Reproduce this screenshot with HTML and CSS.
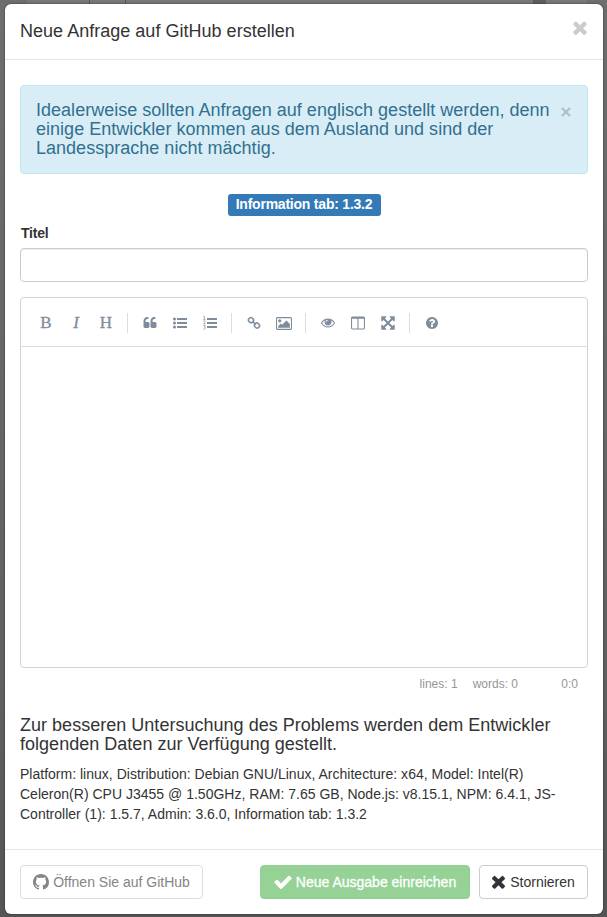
FILE: index.html
```
<!DOCTYPE html>
<html lang="de">
<head>
<meta charset="utf-8">
<title>Neue Anfrage auf GitHub erstellen</title>
<link rel="stylesheet" href="styles.css">
</head>
<body>
<div class="modal">
  <header class="modal-header">
    <h4>Neue Anfrage auf GitHub erstellen</h4>
    <svg class="close" viewBox="302 238 1188 1316"><path d="M1490 1322q0 40-28 68l-136 136q-28 28-68 28t-68-28l-294-294-294 294q-28 28-68 28t-68-28l-136-136q-28-28-28-68t28-68l294-294-294-294q-28-28-28-68t28-68l136-136q28-28 68-28t68 28l294 294 294-294q28-28 68-28t68 28l136 136q28 28 28 68t-28 68l-294 294 294 294q28 28 28 68z"/></svg>
  </header>
  <main class="modal-body">
    <div class="alert">
      <h4>Idealerweise sollten Anfragen auf englisch gestellt werden, denn einige Entwickler kommen aus dem Ausland und sind der Landessprache nicht mächtig.</h4>
      <svg class="alert-close" viewBox="0 0 10 10"><path d="M1 1l8 8M9 1l-8 8"/></svg>
    </div>
    <div class="label-row"><span class="label">Information tab: 1.3.2</span></div>
    <label class="field-label" for="title">Titel</label>
    <input class="field" id="title" type="text">
    <div class="editor">
      <div class="toolbar">
        <span class="tool letter">B</span>
        <span class="tool letter italic">I</span>
        <span class="tool letter">H</span>
        <i class="sep"></i>
        <span class="tool"><svg viewBox="0 0 1792 1792"><path d="M832 960v384q0 80-56 136t-136 56h-384q-80 0-136-56t-56-136v-704q0-104 40.5-198.5t109.5-163.5 163.5-109.5 198.5-40.5h64q26 0 45 19t19 45v128q0 26-19 45t-45 19h-64q-106 0-181 75t-75 181v32q0 40 28 68t68 28h224q80 0 136 56t56 136zm896 0v384q0 80-56 136t-136 56h-384q-80 0-136-56t-56-136v-704q0-104 40.5-198.5t109.5-163.5 163.5-109.5 198.5-40.5h64q26 0 45 19t19 45v128q0 26-19 45t-45 19h-64q-106 0-181 75t-75 181v32q0 40 28 68t68 28h224q80 0 136 56t56 136z"/></svg></span>
        <span class="tool"><svg viewBox="0 0 14 14"><circle cx="1.5" cy="3" r="1.5"/><circle cx="1.5" cy="7" r="1.5"/><circle cx="1.5" cy="11" r="1.5"/><path d="M4 2h10v2H4zM4 6h10v2H4zM4 10h10v2H4z"/></svg></span>
        <span class="tool"><svg viewBox="0 0 14 14"><path d="M4 2h10v2H4zM4 6h10v2H4zM4 10h10v2H4z"/><path class="digits" d="M.4.8l1-.5v3.2M.3 3.6h2.2M.4 5.3q1-.9 1.8 0 .3.8-1.8 2.6h2.2M.4 9.7h2L1.3 11q1.4.2 1.1 1.5-.8 1.2-2.1.4"/></svg></span>
        <i class="sep"></i>
        <span class="tool"><svg class="link" viewBox="0 0 14 14"><rect x="-2.1" y="-2.5" width="5" height="4.6" rx="2" transform="translate(3.6 4) rotate(45)"/><rect x="-2.9" y="-2.1" width="5" height="4.6" rx="2" transform="translate(10.4 9.7) rotate(45)"/><path d="M5.4 5.3l3.4 3.4"/></svg></span>
        <span class="tool"><svg class="wide" viewBox="-64 0 1920 1792"><path d="M576 576q0 80-56 136t-136 56-136-56-56-136 56-136 136-56 136 56 56 136zm1024 384v448h-1408v-192l320-320 160 160 512-512zm96-704h-1600q-13 0-22.5 9.5t-9.5 22.5v1216q0 13 9.5 22.5t22.5 9.5h1600q13 0 22.5-9.5t9.5-22.5v-1216q0-13-9.5-22.5t-22.5-9.5zm160 32v1216q0 66-47 113t-113 47h-1600q-66 0-113-47t-47-113v-1216q0-66 47-113t113-47h1600q66 0 113 47t47 113z"/></svg></span>
        <i class="sep"></i>
        <span class="tool"><svg viewBox="0 64 1792 1792"><path d="M1664 960q-152-236-381-353 61 104 61 225 0 185-131.5 316.5t-316.5 131.5-316.5-131.5-131.5-316.5q0-121 61-225-229 117-381 353 133 205 333.5 326.5t434.5 121.5 434.5-121.5 333.5-326.5zm-720-384q0-20-14-34t-34-14q-125 0-214.5 89.5t-89.5 214.5q0 20 14 34t34 14 34-14 14-34q0-86 61-147t147-61q20 0 34-14t14-34zm848 384q0 34-20 69-140 230-376.5 368.5t-499.5 138.5-499.5-139-376.5-368q-20-35-20-69t20-69q140-229 376.5-368t499.5-139 499.5 139 376.5 368q20 35 20 69z"/></svg></span>
        <span class="tool"><svg viewBox="64 128 1664 1536"><path d="M224 1536h608v-1152h-640v1120q0 13 9.5 22.5t22.5 9.5zm1376-32v-1120h-640v1152h608q13 0 22.5-9.5t9.5-22.5zm128-1216v1216q0 66-47 113t-113 47h-1344q-66 0-113-47t-47-113v-1216q0-66 47-113t113-47h1344q66 0 113 47t47 113z"/></svg></span>
        <span class="tool"><svg viewBox="100 100 1592 1592"><path d="M1411 541l-355 355 355 355 144-144q29-31 70-14 39 17 39 59v448q0 26-19 45t-45 19h-448q-42 0-59-40-17-39 14-69l144-144-355-355-355 355 144 144q31 30 14 69-17 40-59 40h-448q-26 0-45-19t-19-45v-448q0-42 40-59 39-17 69 14l144 144 355-355-355-355-144 144q-19 19-45 19-12 0-24-5-40-17-40-59v-448q0-26 19-45t45-19h448q42 0 59 40 17 39-14 69l-144 144 355 355 355-355-144-144q-31-30-14-69 17-40 59-40h448q26 0 45 19t19 45v448q0 42-39 59-13 5-25 5-26 0-45-19z"/></svg></span>
        <i class="sep"></i>
        <span class="tool"><svg viewBox="0 0 1792 1792"><path d="M1024 1376v-192q0-14-9-23t-23-9h-192q-14 0-23 9t-9 23v192q0 14 9 23t23 9h192q14 0 23-9t9-23zm256-672q0-88-55.5-163t-138.5-116-170-41q-243 0-371 213-15 24 8 42l132 100q7 6 19 6 16 0 25-12 53-68 86-92 34-24 86-24 48 0 85.5 26t37.5 59q0 38-20 61t-68 45q-63 28-115.5 86.5t-52.5 125.5v36q0 14 9 23t23 9h192q14 0 23-9t9-23q0-19 21.5-49.5t54.5-49.5q32-18 49-28.5t46-35 44.5-48 28-60.5 12.5-81zm384 192q0 209-103 385.5t-279.5 279.5-385.5 103-385.5-103-279.5-279.5-103-385.5 103-385.5 279.5-279.5 385.5-103 385.5 103 279.5 279.5 103 385.5z"/></svg></span>
      </div>
      <div class="canvas"></div>
    </div>
    <div class="status"><span>lines: 1</span><span>words: 0</span><span class="cursor">0:0</span></div>
    <h4 class="note">Zur besseren Untersuchung des Problems werden dem Entwickler folgenden Daten zur Verfügung gestellt.</h4>
    <p class="info">Platform: linux, Distribution: Debian GNU/Linux, Architecture: x64, Model: Intel(R) Celeron(R) CPU J3455 @ 1.50GHz, RAM: 7.65 GB, Node.js: v8.15.1, NPM: 6.4.1, JS-Controller (1): 1.5.7, Admin: 3.6.0, Information tab: 1.3.2</p>
  </main>
  <footer class="modal-footer">
    <button class="btn github"><svg viewBox="0 0 16 16"><path d="M8 0C3.58 0 0 3.58 0 8c0 3.54 2.29 6.53 5.47 7.59.4.07.55-.17.55-.38 0-.19-.01-.82-.01-1.49-2.01.37-2.53-.49-2.69-.94-.09-.23-.48-.94-.82-1.15-.28-.15-.68-.52-.01-.53.63-.01 1.08.58 1.23.82.72 1.21 1.87.87 2.33.66.07-.52.28-.87.51-1.07-1.78-.2-3.64-.89-3.64-3.95 0-.87.31-1.59.82-2.15-.08-.2-.36-1.02.08-2.12 0 0 .67-.21 2.2.82.64-.18 1.32-.27 2-.27s1.36.09 2 .27c1.53-1.04 2.2-.82 2.2-.82.44 1.1.16 1.92.08 2.12.51.56.82 1.27.82 2.15 0 3.07-1.87 3.75-3.65 3.95.29.25.54.73.54 1.48 0 1.07-.01 1.93-.01 2.2 0 .21.15.46.55.38A8.01 8.01 0 0 0 16 8c0-4.42-3.58-8-8-8z"/></svg>Öffnen Sie auf GitHub</button>
    <button class="btn submit"><svg viewBox="121 270 1550 1252"><path d="M1671 566q0 40-28 68l-724 724-136 136q-28 28-68 28t-68-28l-136-136-362-362q-28-28-28-68t28-68l136-136q28-28 68-28t68 28l294 295 656-657q28-28 68-28t68 28l136 136q28 28 28 68z"/></svg>Neue Ausgabe einreichen</button>
    <button class="btn cancel"><svg viewBox="302 302 1188 1252"><path d="M1490 1322q0 40-28 68l-136 136q-28 28-68 28t-68-28l-294-294-294 294q-28 28-68 28t-68-28l-136-136q-28-28-28-68t28-68l294-294-294-294q-28-28-28-68t28-68l136-136q28-28 68-28t68 28l294 294 294-294q28-28 68-28t68 28l136 136q28 28 28 68t-28 68l-294 294 294 294q28 28 28 68z"/></svg>Stornieren</button>
  </footer>
</div>
</body>
</html>
```
FILE: styles.css
```
* { box-sizing: border-box; }
body {
  margin: 0;
  height: 917px;
  padding: 4px 4px 3px 5px;
  overflow: hidden;
  font: 14px/20px "Liberation Sans", Arial, sans-serif;
  color: #333;
  background:
    linear-gradient(#5d5d5d, #5d5d5d) 533px 0 / 13px 4px no-repeat,
    linear-gradient(#565656, #565656) 89px 0 / 1px 4px no-repeat,
    linear-gradient(#565656, #565656) 125px 0 / 1px 4px no-repeat,
    linear-gradient(#777, #777) 27px 0 / 560px 4px no-repeat,
    linear-gradient(#6e6e6e, #606060 75%, #555);
}
h4 { margin: 0; font-size: 18px; line-height: 19px; font-weight: 400; letter-spacing: .02px; }
.modal {
  display: flex;
  flex-direction: column;
  height: 910px;
  background: #fff;
  border-radius: 6px;
  box-shadow: 0 0 2px rgba(0, 0, 0, .65);
}
.modal-header {
  display: flex;
  justify-content: space-between;
  height: 56px;
  padding: 17px 16px 0 15px;
  border-bottom: 1px solid #e5e5e5;
}
.modal-header h4 { line-height: 20px; }
.close { width: 14px; height: 15px; margin-top: -1px; fill: #ccc; }
.modal-body { flex: 1; padding: 25px 15px 0; }
.alert {
  display: flex;
  justify-content: space-between;
  height: 89px;
  padding: 15px 16px 15px 15px;
  border: 1px solid #bce8f1;
  border-radius: 4px;
  background: #d9edf7;
  color: #31708f;
}
.alert h4 { width: 520px; }
.alert-close { width: 10px; height: 10px; margin-top: 6px; stroke: #aebec6; stroke-width: 2.2; }
.label-row { display: flex; justify-content: center; padding-top: 20px; }
.label {
  width: 153px;
  height: 22px;
  text-align: center;
  border-radius: 3px;
  background: #337ab7;
  color: #fff;
  font-weight: 700;
  letter-spacing: -.22px;
}
.field-label { display: block; margin: 7px 0 5px 1px; font-weight: 700; letter-spacing: -.2px; }
.field {
  display: block;
  width: 100%;
  height: 34px;
  border: 1px solid #ccc;
  border-radius: 4px;
  box-shadow: inset 0 1px 1px rgba(0, 0, 0, .075);
}
.editor { height: 371px; margin-top: 15px; border: 1px solid #d4d4d4; border-radius: 4px; }
.toolbar {
  display: flex;
  align-items: center;
  height: 49px;
  padding: 2px 10px 0;
  border-bottom: 1px solid #ddd;
  color: #7f8c9b;
}
.tool { display: flex; align-items: center; justify-content: center; width: 30px; height: 30px; }
.tool svg { width: 14px; height: 14px; fill: currentColor; overflow: visible; }
.tool svg.wide { width: 16px; height: 15px; }
.tool .digits { fill: none; stroke: currentColor; stroke-width: .7; }
.tool .link { fill: none; stroke: currentColor; stroke-width: 1.5; }
.letter { font: 17px/30px "Liberation Serif", serif; -webkit-text-stroke: .3px; }
.italic { font-style: italic; }
.sep { width: 1px; height: 20px; margin: 0 7px 0 6px; background: #ddd; }
.status {
  display: flex;
  justify-content: flex-end;
  gap: 15px;
  height: 36px;
  padding: 6px 10px 0;
  font-size: 12px;
  color: #959694;
}
.cursor { width: 45px; text-align: right; }
.note { margin-top: 12px; }
.info { margin: 10px 0 0; letter-spacing: .01px; }
.modal-footer {
  display: flex;
  height: 65px;
  padding: 15px 15px 0;
  border-top: 1px solid #e5e5e5;
}
.btn {
  display: flex;
  align-items: center;
  justify-content: center;
  gap: 4px;
  height: 34px;
  padding: 0;
  border: 1px solid #ccc;
  border-radius: 4px;
  background: #fff;
  color: #333;
  font: inherit;
  white-space: nowrap;
}
.btn svg { fill: currentColor; }
.github { width: 183px; border-color: #ddd; color: #858585; }
.github svg { width: 16px; height: 16px; }
.submit { width: 210px; margin-left: auto; border-color: #93d093; background: #96d296; color: #fff; -webkit-text-stroke: .3px; }
.submit svg { width: 18px; height: 14px; }
.cancel { width: 109px; margin-left: 9px; gap: 5px; }
.cancel svg { width: 13px; height: 14px; }
```
